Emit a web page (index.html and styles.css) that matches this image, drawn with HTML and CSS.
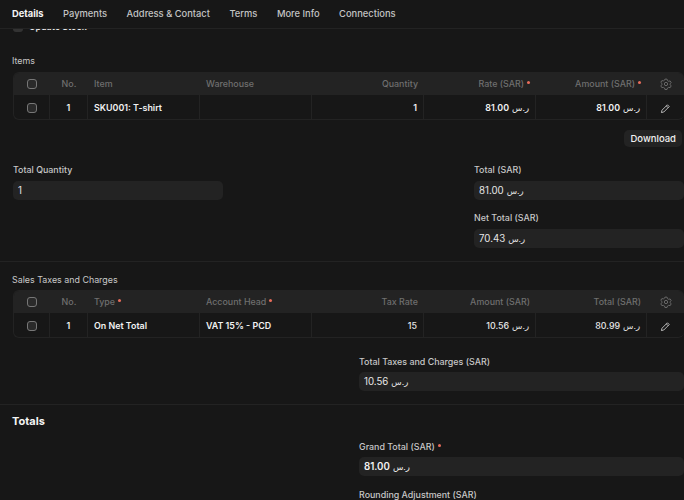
FILE: index.html
```html
<!DOCTYPE html>
<html lang="en">
<head>
  <meta charset="UTF-8">
  <title>Sales Invoice</title>
  <link rel="stylesheet" href="styles.css">
</head>
<body>
  <nav class="tabs">
    <a class="tab active">Details</a>
    <a class="tab">Payments</a>
    <a class="tab">Address &amp; Contact</a>
    <a class="tab">Terms</a>
    <a class="tab">More Info</a>
    <a class="tab">Connections</a>
  </nav>

  <div class="peek"><span class="peek-box"></span>Update Stock</div>

  <section class="items">
    <div class="grid-label">Items</div>
    <div class="grid">
      <div class="row head">
        <div class="cell check"><span class="box"></span></div>
        <div class="cell no">No.</div>
        <div class="cell">Item</div>
        <div class="cell">Warehouse</div>
        <div class="cell num">Quantity</div>
        <div class="cell num">Rate (SAR) <i class="req"></i></div>
        <div class="cell num">Amount (SAR) <i class="req"></i></div>
        <div class="cell icon">
          <svg width="12" height="12" viewBox="0 0 16 16"><path d="M6.6 1.5h2.8l.5 1.900 1.700 1 1.900-.5 1.400 2.400-1.400 1.400v1.400l1.400 1.400-1.400 2.400-1.900-.5-1.700 1-.5 1.900H6.600l-.5-1.900-1.700-1-1.900.5-1.400-2.400 1.400-1.400V7.200L1.100 5.800l1.400-2.400 1.900.5 1.700-1z"/><circle cx="8" cy="8" r="2.2"/></svg>
        </div>
      </div>
      <div class="row body">
        <div class="cell check"><span class="box"></span></div>
        <div class="cell no val">1</div>
        <div class="cell val">SKU001: T-shirt</div>
        <div class="cell"></div>
        <div class="cell num val">1</div>
        <div class="cell num val">81.00 <span class="cur">ر.س</span></div>
        <div class="cell num val">81.00 <span class="cur">ر.س</span></div>
        <div class="cell icon">
          <svg class="pencil" width="11" height="11" viewBox="0 0 16 16"><path d="M10.800 2.600l2.600 2.600-7.900 7.900-3.400.8.8-3.400z M9.200 4.200l2.600 2.600"/></svg>
        </div>
      </div>
    </div>
    <div class="grid-actions"><button class="btn">Download</button></div>
  </section>

  <section class="fields">
    <div class="col">
      <div class="field">
        <label>Total Quantity</label>
        <div class="control">1</div>
      </div>
    </div>
    <div class="col">
      <div class="field">
        <label>Total (SAR)</label>
        <div class="control">81.00 <span class="cur">ر.س</span></div>
      </div>
      <div class="field">
        <label>Net Total (SAR)</label>
        <div class="control">70.43 <span class="cur">ر.س</span></div>
      </div>
    </div>
  </section>

  <section class="taxes">
    <div class="grid-label">Sales Taxes and Charges</div>
    <div class="grid">
      <div class="row head">
        <div class="cell check"><span class="box"></span></div>
        <div class="cell no">No.</div>
        <div class="cell">Type <i class="req"></i></div>
        <div class="cell">Account Head <i class="req"></i></div>
        <div class="cell num">Tax Rate</div>
        <div class="cell num">Amount (SAR)</div>
        <div class="cell num">Total (SAR)</div>
        <div class="cell icon">
          <svg width="12" height="12" viewBox="0 0 16 16"><path d="M6.6 1.5h2.8l.5 1.900 1.700 1 1.900-.5 1.400 2.400-1.400 1.400v1.400l1.400 1.400-1.400 2.400-1.900-.5-1.700 1-.5 1.900H6.600l-.5-1.900-1.700-1-1.900.5-1.400-2.400 1.400-1.400V7.200L1.100 5.800l1.400-2.400 1.900.5 1.700-1z"/><circle cx="8" cy="8" r="2.2"/></svg>
        </div>
      </div>
      <div class="row body">
        <div class="cell check"><span class="box"></span></div>
        <div class="cell no val">1</div>
        <div class="cell val">On Net Total</div>
        <div class="cell val">VAT 15% - PCD</div>
        <div class="cell num">15</div>
        <div class="cell num">10.56 <span class="cur">ر.س</span></div>
        <div class="cell num">80.99 <span class="cur">ر.س</span></div>
        <div class="cell icon">
          <svg class="pencil" width="11" height="11" viewBox="0 0 16 16"><path d="M10.800 2.600l2.600 2.600-7.900 7.900-3.400.8.8-3.400z M9.200 4.200l2.600 2.600"/></svg>
        </div>
      </div>
    </div>
    <div class="wide-col">
      <div class="field">
        <label>Total Taxes and Charges (SAR)</label>
        <div class="control">10.56 <span class="cur">ر.س</span></div>
      </div>
    </div>
  </section>

  <section class="totals">
    <h4>Totals</h4>
    <div class="wide-col">
      <div class="field">
        <label>Grand Total (SAR) <i class="req"></i></label>
        <div class="control strong">81.00 <span class="cur">ر.س</span></div>
      </div>
      <div class="field">
        <label>Rounding Adjustment (SAR)</label>
      </div>
    </div>
  </section>
</body>
</html>
```

FILE: styles.css
```css
html, body {
    height: 500px;
    overflow: hidden;
}
body {
    margin: 0;
    background-color: #171717;
    color: #f0f0f0;
    font-family: 'Inter', 'DejaVu Sans', sans-serif;
    font-size: 8.9px;
    line-height: 12px;
}
.tabs {
    position: relative;
    z-index: 2;
    display: flex;
    align-items: center;
    gap: 19.5px;
    height: 28px;
    padding-left: 12px;
    background-color: #171717;
    border-bottom: 1px solid #232323;
}
.tab {
    font-size: 9.35px;
    font-weight: 500;
    color: #c4c4c4;
}
.tab.active {
    font-weight: 700;
    color: #f4f4f4;
}
.peek {
    display: flex;
    align-items: center;
    gap: 6px;
    height: 12px;
    margin-top: -8px;
    padding-left: 13px;
    font-weight: 600;
    color: #e8e8e8;
}
.peek-box {
    width: 10px;
    height: 10px;
    border-radius: 3px;
    background-color: #333333;
}

.items {
    padding-top: 22px;
}
.grid-label {
    padding-left: 12px;
    color: #c8c8c8;
    font-size: 8.9px;
    margin-bottom: 5px;
}
.grid {
    margin-left: 13px;
    border: 1px solid #232323;
    border-right: 0;
    border-radius: 6px;
    overflow: hidden;
}
.row {
    display: grid;
    grid-template-columns: 36px 38px 112px 112px 112px 112px 111px 38px;
    height: 24px;
}
.row.head {
    height: 22px;
    background-color: #232323;
    font-weight: 500;
}
.cell {
    display: flex;
    align-items: center;
    gap: 3px;
    padding: 0 6px;
    border-right: 1px solid #232323;
    font-weight: 500;
    color: #e6e6e6;
}
.row.body .cell {
    padding-top: 2px;
}
.head .cell {
    border-right: 0;
    color: #6f6f6f;
}
.cell.val {
    font-weight: 600;
    color: #f2f2f2;
}
.cell.check, .cell.no, .cell.icon {
    justify-content: center;
    padding: 0;
}
.cell.num {
    justify-content: flex-end;
}
.cell.icon {
    border-right: 0;
    padding-right: 1px;
}
.cur {
    font-size: 8.5px;
    font-weight: 400;
}
.box {
    width: 10px;
    height: 10px;
    border: 1px solid #777777;
    border-radius: 3px;
    box-sizing: border-box;
    background-color: #2a2a2a;
}
.req {
    width: 3px;
    height: 3px;
    border-radius: 50%;
    background-color: #e86c5a;
    margin-bottom: 3px;
}
svg {
    fill: none;
    stroke: #6f6f6f;
    stroke-width: 1.2;
    stroke-linejoin: round;
}
svg.pencil {
    stroke: #d8d8d8;
}

.grid-actions {
    display: flex;
    justify-content: flex-end;
    padding: 10px 2px 0 0;
}
.btn {
    height: 17px;
    padding: 0 6px;
    border: 0;
    border-radius: 5px;
    background-color: #232323;
    color: #f0f0f0;
    font-family: inherit;
    font-size: 9.5px;
    font-weight: 500;
}

.fields {
    display: flex;
    justify-content: space-between;
    padding: 17px 0 1px 13px;
    border-bottom: 1px solid #232323;
}
.col {
    width: 210px;
}
.wide-col {
    width: 325px;
    margin-left: auto;
}
.field {
    margin-bottom: 12px;
}
.field label {
    display: flex;
    align-items: center;
    gap: 3px;
    height: 12px;
    margin-bottom: 5px;
    color: #c8c8c8;
    font-weight: 500;
}
.control {
    display: flex;
    align-items: center;
    gap: 3px;
    height: 19px;
    padding: 0 5px;
    border-radius: 5px;
    background-color: #232323;
    color: #e6e6e6;
    font-size: 9.7px;
    font-weight: 400;
}
.control.strong {
    font-weight: 600;
    color: #f2f2f2;
}

.taxes {
    padding-top: 12px;
    border-bottom: 1px solid #232323;
}
.taxes .grid-label {
    margin-bottom: 4px;
}
.taxes .wide-col {
    padding-top: 18px;
    padding-bottom: 1px;
}
.taxes .field label {
    margin-bottom: 4px;
}
.totals {
    padding-top: 9px;
}
.totals h4 {
    margin: 0 0 13px 12px;
    font-size: 11px;
    font-weight: 700;
    line-height: 14px;
    color: #f4f4f4;
}
.totals .field:first-child {
    margin-bottom: 13px;
}
.totals .field:first-child label {
    margin-bottom: 4px;
}
```
